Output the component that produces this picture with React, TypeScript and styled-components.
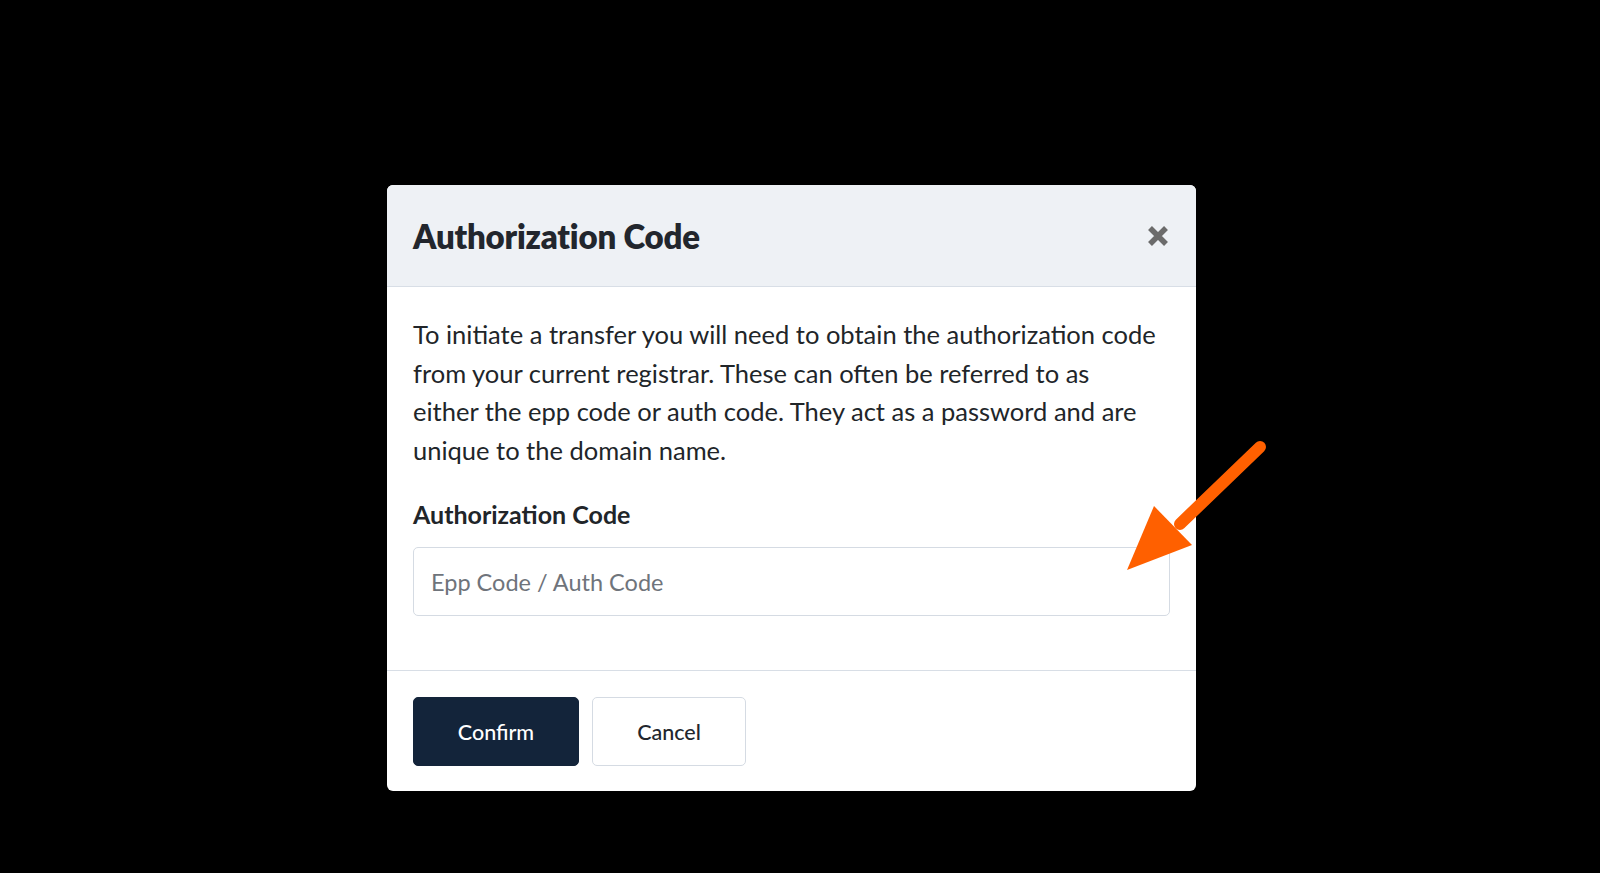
import React from "react";
import styled, { createGlobalStyle } from "styled-components";

const Global = createGlobalStyle`
  html, body { margin: 0; padding: 0; background: #000; }
  body { font-family: Lato, "Noto Sans", sans-serif; }
  * { box-sizing: border-box; }
`;

const Backdrop = styled.div`
  position: relative;
  width: 1600px;
  height: 873px;
  background: #000;
  padding: 185px 0 0 387px;
`;

const Modal = styled.div`
  width: 809px;
  background: #fff;
  border-radius: 6px;
  overflow: hidden;
  display: flex;
  flex-direction: column;
`;

const Header = styled.div`
  height: 102px;
  background: #eef1f5;
  border-bottom: 1px solid #d8dee6;
  display: flex;
  align-items: center;
  justify-content: space-between;
  padding: 0 27px 0 26px;
`;

const Title = styled.h2`
  margin: 0;
  font-size: 33px;
  font-weight: 800;
  color: #22262d;
  letter-spacing: -0.2px;
`;

const Close = styled.button`
  border: 0;
  background: none;
  padding: 0;
  width: 22px;
  height: 22px;
  display: flex;
  align-items: center;
  justify-content: center;
  cursor: pointer;
`;

const Body = styled.div`
  padding: 28px 26px 54px 26px;
  border-bottom: 1px solid #d8dee6;
  display: flex;
  flex-direction: column;
`;

const Text = styled.p`
  margin: 0;
  font-size: 25.5px;
  line-height: 38.5px;
  color: #212529;
  white-space: nowrap;
`;

const Label = styled.label`
  margin-top: 30px;
  font-size: 25px;
  font-weight: 700;
  color: #212529;
  line-height: 30px;
`;

const Input = styled.input`
  margin-top: 18px;
  height: 69px;
  border: 1px solid #d5dbe3;
  border-radius: 5px;
  padding: 0 17px;
  font-family: inherit;
  font-size: 23.5px;
  color: #212529;
  outline: none;
  &::placeholder { color: #6f747b; }
`;

const Footer = styled.div`
  display: flex;
  gap: 13px;
  padding: 26px 26px 25px 26px;
`;

const Button = styled.button<{ $primary?: boolean }>`
  height: 69px;
  width: ${(p) => (p.$primary ? "166px" : "154px")};
  border-radius: 5px;
  font-family: inherit;
  font-size: 21.5px;
  font-weight: 500;
  cursor: pointer;
  background: ${(p) => (p.$primary ? "#13243a" : "#fff")};
  color: ${(p) => (p.$primary ? "#fff" : "#22262d")};
  border: 1px solid ${(p) => (p.$primary ? "#13243a" : "#d5dbe3")};
`;

const Arrow = styled.svg`
  position: absolute;
  left: 0;
  top: 0;
  pointer-events: none;
`;

export default function App() {
  return (
    <>
      <Global />
      <Backdrop>
        <Modal>
          <Header>
            <Title>Authorization Code</Title>
            <Close aria-label="Close">
              <svg width="22" height="22" viewBox="0 0 22 22">
                <path d="M3 3 L19 19 M19 3 L3 19" stroke="#6b6b6b" strokeWidth="5.5" strokeLinecap="butt" />
              </svg>
            </Close>
          </Header>
          <Body>
            <Text>
              To initiate a transfer you will need to obtain the authorization code
              <br />
              from your current registrar. These can often be referred to as
              <br />
              either the epp code or auth code. They act as a password and are
              <br />
              unique to the domain name.
            </Text>
            <Label htmlFor="auth">Authorization Code</Label>
            <Input id="auth" placeholder="Epp Code / Auth Code" />
          </Body>
          <Footer>
            <Button $primary>Confirm</Button>
            <Button>Cancel</Button>
          </Footer>
        </Modal>
        <Arrow width="1600" height="873" viewBox="0 0 1600 873">
          <line x1="1260" y1="447" x2="1180" y2="524" stroke="#ff6000" strokeWidth="12" strokeLinecap="round" />
          <polygon points="1154,506 1192,545 1127,570" fill="#ff6000" />
        </Arrow>
      </Backdrop>
    </>
  );
}
